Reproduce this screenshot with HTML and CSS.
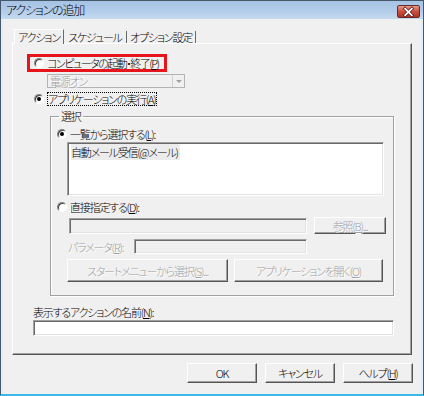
FILE: index.html
```html
<!DOCTYPE html>
<html lang="ja">
<head>
    <meta charset="UTF-8">
    <title>アクションの追加</title>
    <link rel="stylesheet" href="styles.css">
</head>
<body>
    <div class="window">
        <div class="titlebar">
            <span class="title">アクションの追加</span>
            <span class="close">
                <svg width="22" height="12" viewBox="0 0 22 12">
                    <path d="M7.5 2.5 L14.5 9.5 M14.5 2.5 L7.5 9.5" stroke="#5a1e1e" stroke-width="3.4" stroke-linecap="square"/>
                    <path d="M7.5 2.5 L14.5 9.5 M14.5 2.5 L7.5 9.5" stroke="#fff" stroke-width="1.8" stroke-linecap="square"/>
                </svg>
            </span>
        </div>
        <div class="client">
            <div class="tabs">
                <div class="tab active">アクション</div>
                <div class="tab">スケジュール</div>
                <div class="tab">オプション設定</div>
            </div>
            <div class="panel">
                <div class="highlight">
                    <span class="radio"></span>
                    <span class="tight">コンピュータの起動・終了(<u>P</u>)</span>
                </div>
                <div class="combo">
                    <span class="disabled-text">電源オン</span>
                    <span class="combo-arrow"></span>
                </div>
                <div class="option top-option">
                    <span class="radio checked"></span>
                    <span class="focus">アプリケーションの実行(<u>A</u>)</span>
                </div>
                <fieldset class="group">
                    <legend>選択</legend>
                    <div class="option">
                        <span class="radio checked"></span>
                        <span>一覧から選択する(<u>L</u>):</span>
                    </div>
                    <div class="listbox">
                        <span class="list-item">自動メール受信(@メール)</span>
                    </div>
                    <div class="option direct">
                        <span class="radio"></span>
                        <span>直接指定する(<u>D</u>):</span>
                    </div>
                    <div class="path-row">
                        <div class="textbox disabled path-box"></div>
                        <div class="button disabled browse">参照(<u>B</u>)...</div>
                    </div>
                    <div class="param-row">
                        <span class="disabled-text param-label">パラメータ(<u>R</u>):</span>
                        <div class="textbox disabled param-box"></div>
                    </div>
                    <div class="launch-row">
                        <div class="button disabled start-menu">スタートメニューから選択(<u>S</u>)...</div>
                        <div class="button disabled open-app">アプリケーションを開く(<u>O</u>)</div>
                    </div>
                </fieldset>
                <div class="name-label">表示するアクションの名前(<u>N</u>):</div>
                <div class="textbox name-box"></div>
            </div>
            <div class="buttons">
                <div class="button dialog-btn">OK</div>
                <div class="button dialog-btn">キャンセル</div>
                <div class="button dialog-btn">ヘルプ(<u>H</u>)</div>
            </div>
        </div>
    </div>
</body>
</html>
```

FILE: styles.css
```css
* {
    box-sizing: border-box;
}
body {
    margin: 0;
    font-family: "Noto Sans CJK JP", "Noto Sans", sans-serif;
    font-size: 11px;
    font-weight: 300;
    letter-spacing: -1.2px;
    font-feature-settings: "palt";
    color: #000;
}
.window {
    width: 424px;
    height: 396px;
    border: 1px solid #44576b;
    border-bottom: 2px solid #3cb8e8;
    background-color: #f0f0f0;
    display: flex;
    flex-direction: column;
}
.titlebar {
    height: 18px;
    background: linear-gradient(#a6c3e3, #b3cdea 60%, #c6dbf0);
    display: flex;
    align-items: center;
    justify-content: space-between;
    padding: 0 3px 0 5px;
}
.title {
    font-size: 12px;
    line-height: 16px;
}
.close {
    width: 23px;
    height: 13px;
    margin-top: 3px;
    border: 1px solid #6b2a2a;
    border-radius: 2px;
    background: linear-gradient(#e89a8a, #c94f3e 50%, #b03524);
    display: flex;
    align-items: center;
    justify-content: center;
}
.close svg {
    display: block;
}
.client {
    flex: 1;
    border-left: 3px solid #e8eef5;
    border-right: 3px solid #e8eef5;
    padding: 10px 8px 0 8px;
}
.tabs {
    display: flex;
    height: 14px;
    padding-left: 2px;
    position: relative;
    z-index: 1;
}
.tab {
    line-height: 12px;
    margin-top: 2px;
    border-right: 1px solid #6a6a6a;
    height: 12px;
    text-align: center;
    white-space: nowrap;
}
.tab:nth-child(2) {
    width: 63px;
}
.tab:nth-child(3) {
    width: 69px;
}
.tab.active {
    width: 50px;
    margin-top: 0;
    height: 15px;
    padding-top: 1px;
    border-left: 1px solid #fff;
    border-top: 1px solid #fff;
    background-color: #f0f0f0;
}
.panel {
    height: 312px;
    border: 1px solid #fff;
    border-right-color: #555;
    border-bottom-color: #555;
    box-shadow: inset -1px -1px #a0a0a0;
    padding: 10px 0 0 0;
}
.radio {
    width: 10px;
    height: 10px;
    border-radius: 50%;
    border: 1px solid;
    border-color: #808080 #fff #fff #808080;
    background-color: #fff;
    box-shadow: inset 1px 1px #404040;
    display: inline-flex;
    align-items: center;
    justify-content: center;
    flex-shrink: 0;
}
.radio.checked::after {
    content: "";
    width: 4px;
    height: 4px;
    border-radius: 50%;
    background-color: #000;
}
.highlight {
    width: 140px;
    height: 18px;
    margin-left: 14px;
    border: 3px solid #e8141c;
    display: flex;
    align-items: center;
    gap: 3px;
    padding-left: 4px;
    line-height: 12px;
    white-space: nowrap;
}
.tight {
    letter-spacing: -1.5px;
}
.combo {
    width: 138px;
    height: 14px;
    margin: 2px 0 0 34px;
    border: 1px solid #b4b4b4;
    display: flex;
    align-items: center;
    justify-content: space-between;
    padding-left: 2px;
    line-height: 12px;
}
.combo-arrow {
    width: 12px;
    height: 12px;
    border-left: 1px solid #d0d0d0;
    position: relative;
}
.combo-arrow::after {
    content: "";
    position: absolute;
    left: 3px;
    top: 5px;
    border: 3px solid transparent;
    border-top: 3px solid #a0a0a0;
    border-bottom: 0;
}
.disabled-text,
.disabled {
    color: #a0a0a0;
    text-shadow: 1px 1px #fff;
}
.option {
    display: flex;
    align-items: center;
    gap: 3px;
    height: 13px;
    line-height: 12px;
    white-space: nowrap;
}
.top-option {
    margin: 4px 0 0 21px;
    gap: 4px;
}
.focus {
    outline: 1px dotted #000;
    outline-offset: 0;
}
.group {
    width: 344px;
    margin: 5px 0 0 37px;
    padding: 5px 0 13px 6px;
    border: 1px solid #a0a0a0;
    box-shadow: inset 1px 1px #fff, 1px 1px #fff;
}
.group legend {
    line-height: 12px;
    padding: 0 2px;
    margin-left: 2px;
}
.listbox {
    width: 317px;
    height: 54px;
    margin: 2px 0 0 10px;
    background-color: #fff;
    border: 1px solid #a0a0a0;
    border-right-color: #fff;
    border-bottom-color: #fff;
    box-shadow: inset 1px 1px #696969, inset -1px -1px #e3e3e3;
    padding: 3px 0 0 3px;
    line-height: 13px;
}
.list-item {
    background-color: #ececec;
    padding-right: 2px;
}
.direct {
    margin-top: 4px;
}
.textbox {
    height: 16px;
    border: 1px solid #a0a0a0;
    border-right-color: #fff;
    border-bottom-color: #fff;
    box-shadow: inset 1px 1px #696969, inset -1px -1px #e3e3e3;
}
.textbox.disabled {
    background-color: #f0f0f0;
}
.path-row {
    display: flex;
    align-items: center;
    height: 17px;
    margin: 4px 0 0 12px;
    gap: 7px;
}
.path-box {
    width: 238px;
}
.button {
    border: 1px solid #fff;
    border-right-color: #555;
    border-bottom-color: #555;
    box-shadow: inset -1px -1px #a0a0a0;
    display: flex;
    align-items: center;
    justify-content: center;
    line-height: 12px;
    white-space: nowrap;
}
.browse {
    width: 72px;
    height: 17px;
}
.param-row {
    display: flex;
    align-items: center;
    height: 15px;
    margin: 5px 0 0 11px;
    line-height: 12px;
}
.param-label {
    width: 66px;
    flex-shrink: 0;
    white-space: nowrap;
}
.param-box {
    width: 173px;
    height: 15px;
}
.launch-row {
    display: flex;
    gap: 6px;
    margin: 5px 0 0 10px;
}
.start-menu {
    width: 161px;
    height: 23px;
}
.open-app {
    width: 149px;
    height: 23px;
}
.name-label {
    margin: 10px 0 0 20px;
    line-height: 13px;
}
.name-box {
    width: 361px;
    margin: 1px 0 0 20px;
    background-color: #fff;
}
.buttons {
    display: flex;
    justify-content: flex-end;
    gap: 8px;
    margin: 8px -1px 0 0;
}
.dialog-btn {
    width: 70px;
    height: 20px;
}
```
